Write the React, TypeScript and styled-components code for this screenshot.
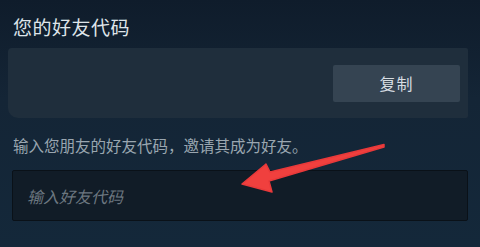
import styled, { createGlobalStyle } from "styled-components";

const GlobalStyle = createGlobalStyle`
  html, body {
    margin: 0;
    padding: 0;
    background: #142334;
  }
  body {
    font-family: "Noto Sans CJK SC", "Noto Sans", sans-serif;
  }
`;

const Page = styled.div`
  position: relative;
  width: 480px;
  height: 247px;
  box-sizing: border-box;
  padding: 14px 12px 0 8px;
  background: linear-gradient(180deg, #0f1c2b 0%, #142536 40%, #14283a 100%);
  overflow: hidden;
`;

const Title = styled.div`
  margin-left: 5px;
  font-size: 19px;
  line-height: 26px;
  color: #dfe5ea;
  letter-spacing: 0.5px;
`;

const CodeBox = styled.div`
  margin-top: 8px;
  height: 70px;
  display: flex;
  align-items: center;
  justify-content: flex-end;
  padding-right: 8px;
  background: #1f2e3c;
  border-radius: 4px 2px 2px 10px;
`;

const CopyButton = styled.button`
  width: 127px;
  height: 37px;
  border: none;
  border-radius: 2px;
  background: #354452;
  color: #d7dde2;
  font-family: inherit;
  font-size: 16px;
  letter-spacing: 1px;
`;

const Hint = styled.div`
  margin: 16px 0 0 5px;
  font-size: 15.5px;
  line-height: 22px;
  color: #9aa6b0;
`;

const CodeInput = styled.input`
  display: block;
  box-sizing: border-box;
  margin: 14px 0 0 4px;
  width: 456px;
  height: 51px;
  padding: 0 14px;
  background: #111c27;
  border: 1px solid #0a1118;
  border-radius: 2px;
  color: #dfe5ea;
  font-family: inherit;
  font-size: 16px;
  font-style: italic;
  outline: none;

  &::placeholder {
    color: #6c7780;
    font-style: italic;
  }
`;

const Arrow = styled.svg`
  position: absolute;
  left: 0;
  top: 0;
  pointer-events: none;
`;

export default function App() {
  return (
    <>
      <GlobalStyle />
      <Page>
        <Title>您的好友代码</Title>
        <CodeBox>
          <CopyButton>复制</CopyButton>
        </CodeBox>
        <Hint>输入您朋友的好友代码，邀请其成为好友。</Hint>
        <CodeInput placeholder="输入好友代码" />
        <Arrow width="480" height="247" viewBox="0 0 480 247">
          <path
            d="M384 144.5 L270 172 L266 164 L242 184 L272 192 L269 181 L384 147 Z"
            fill="#f0403e"
            stroke="#e8393a"
            strokeWidth="1.5"
            strokeLinejoin="round"
          />
        </Arrow>
      </Page>
    </>
  );
}
